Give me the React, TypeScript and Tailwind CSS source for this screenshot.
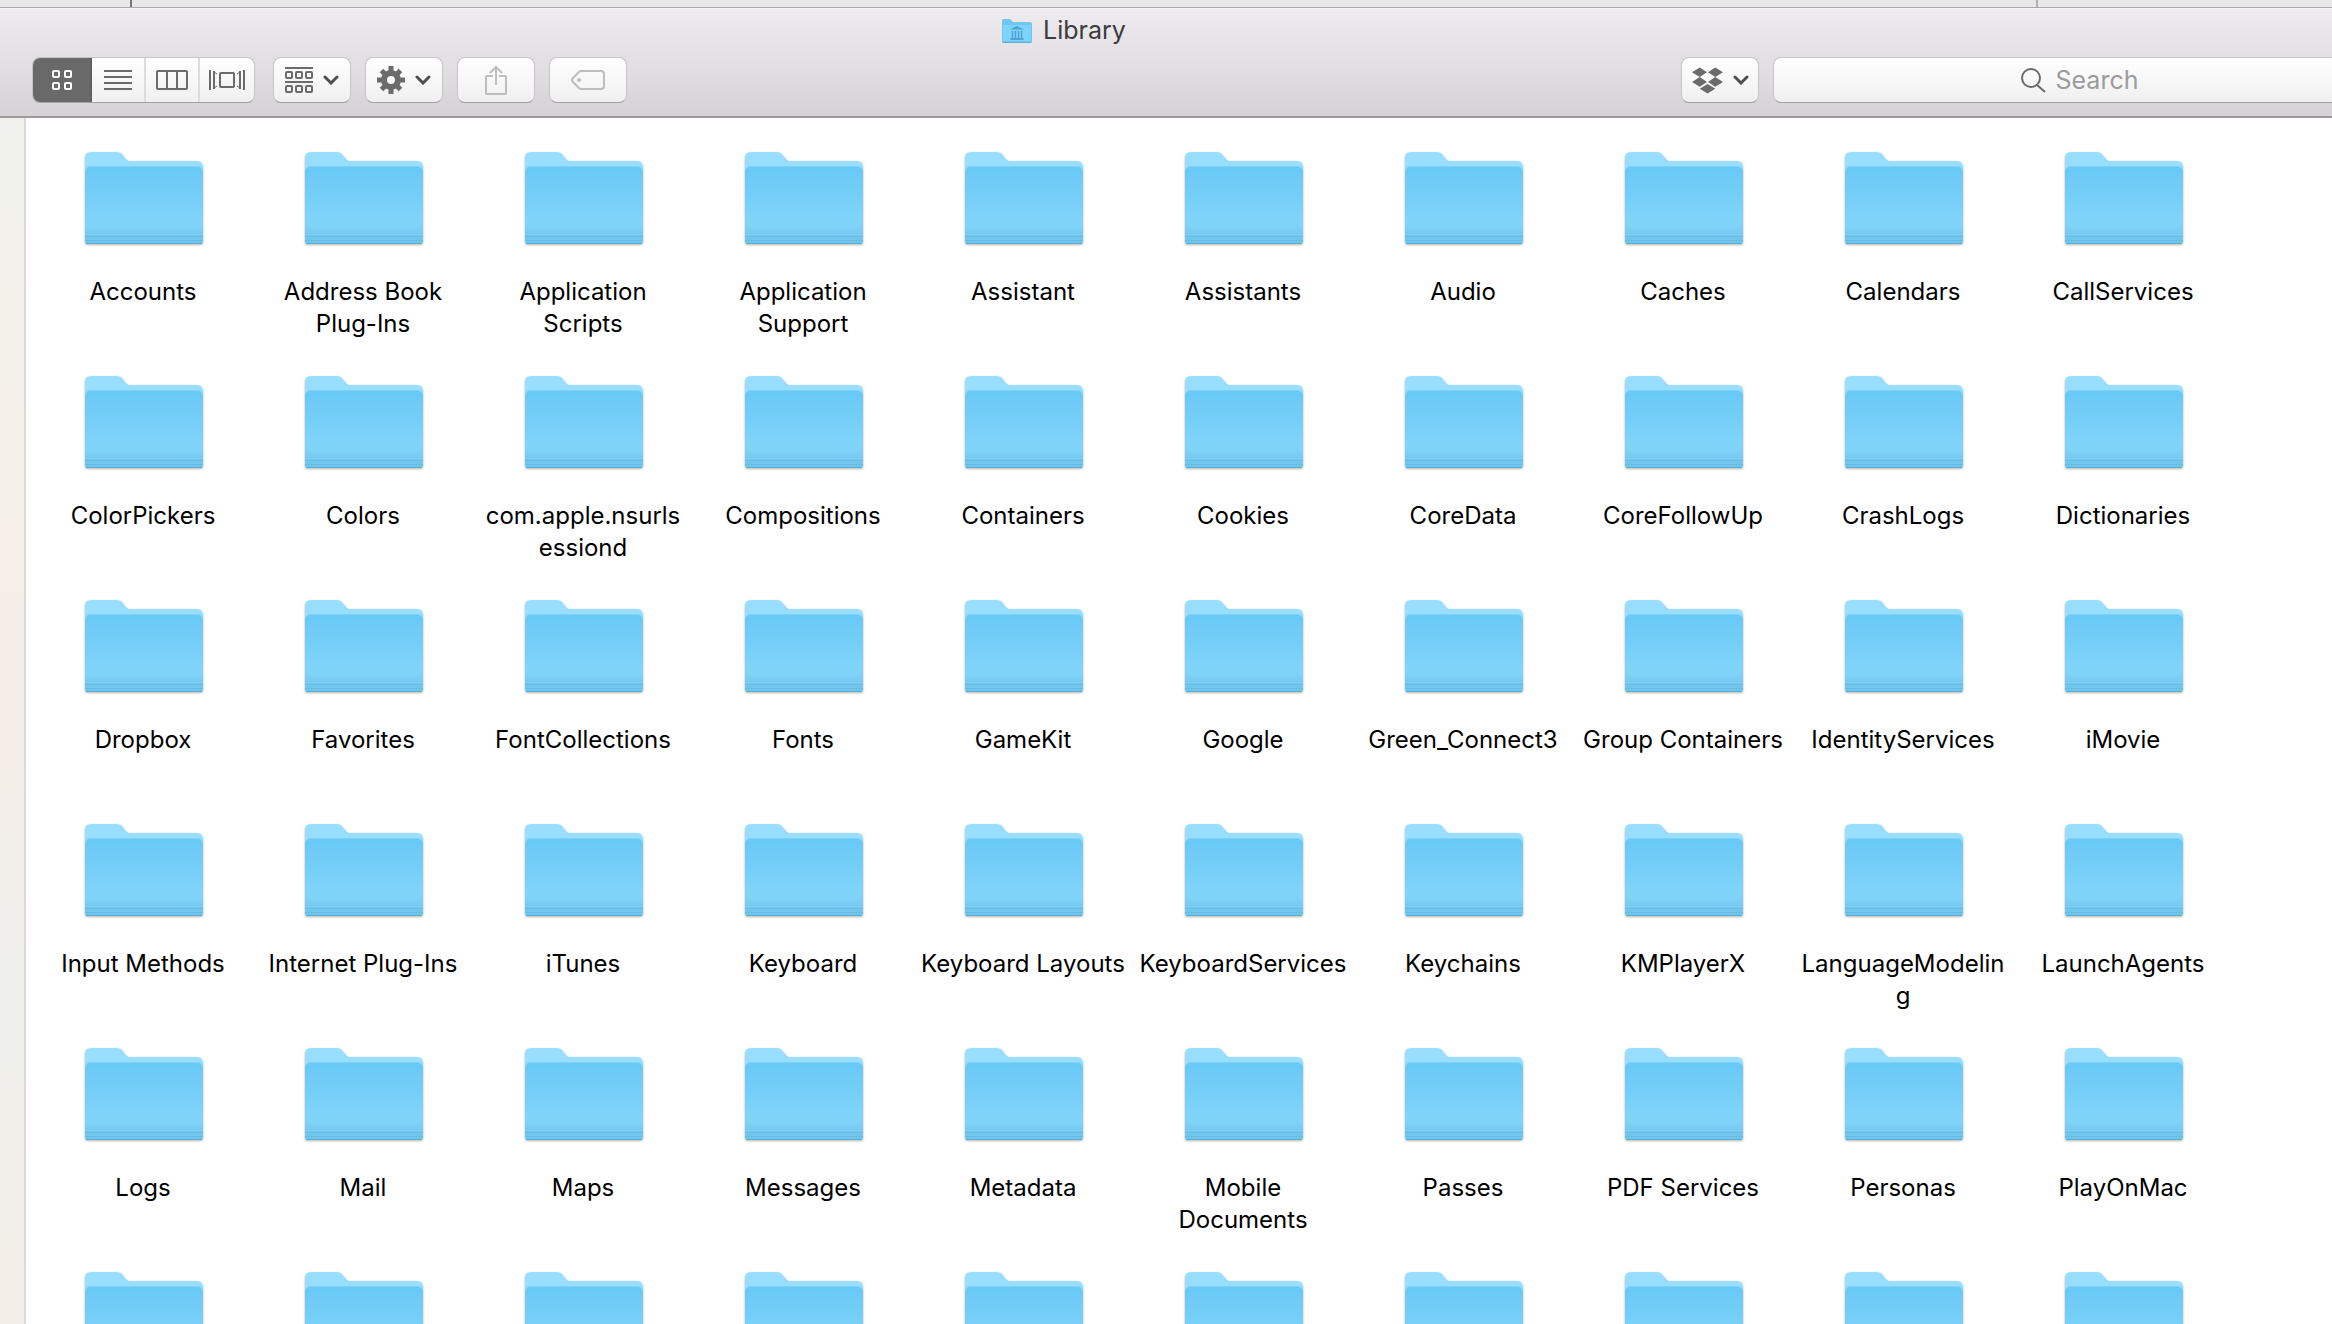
import React from "react";

const folders = [
  "Accounts", "Address Book Plug-Ins", "Application Scripts", "Application Support", "Assistant",
  "Assistants", "Audio", "Caches", "Calendars", "CallServices",
  "ColorPickers", "Colors", "com.apple.nsurlsessiond", "Compositions", "Containers",
  "Cookies", "CoreData", "CoreFollowUp", "CrashLogs", "Dictionaries",
  "Dropbox", "Favorites", "FontCollections", "Fonts", "GameKit",
  "Google", "Green_Connect3", "Group Containers", "IdentityServices", "iMovie",
  "Input Methods", "Internet Plug-Ins", "iTunes", "Keyboard", "Keyboard Layouts",
  "KeyboardServices", "Keychains", "KMPlayerX", "LanguageModeling", "LaunchAgents",
  "Logs", "Mail", "Maps", "Messages", "Metadata",
  "Mobile Documents", "Passes", "PDF Services", "Personas", "PlayOnMac",
];

const clippedRow = Array.from({ length: 10 }, (_, i) => i);

const FolderDefs = () => (
  <svg className="absolute size-0" aria-hidden="true">
    <defs>
      <linearGradient id="folderFront" x1="0" y1="0" x2="0" y2="1">
        <stop offset="0" stopColor="#69c9f6" />
        <stop offset="0.7" stopColor="#80d4f9" />
        <stop offset="0.78" stopColor="#7ed2f8" />
        <stop offset="0.88" stopColor="#72c8ef" />
        <stop offset="1" stopColor="#70c5ec" />
      </linearGradient>
      <filter id="folderShadow" x="-10%" y="-10%" width="120%" height="125%">
        <feDropShadow dx="0" dy="1" stdDeviation="1" floodColor="#000" floodOpacity="0.3" />
      </filter>
    </defs>
  </svg>
);

const FolderIcon = () => (
  <svg width="128" height="104" viewBox="-1 -1 128 104" aria-hidden="true">
    <g filter="url(#folderShadow)">
      <path
        d="M5 10 Q5 4 11 4 H37 Q40 4 42 6 L47 12 Q48 13 50 13 H117 Q123 13 123 19 V93 Q123 96 120 96 H8 Q5 96 5 93 Z"
        fill="#97deff"
      />
      <path d="M5 24 Q5 19 10 19 H118 Q123 19 123 24 V93 Q123 96 120 96 H8 Q5 96 5 93 Z" fill="url(#folderFront)" />
    </g>
    <path d="M8 18.500 H120" stroke="#84d1f5" />
    <path d="M5 86.500 H123" stroke="#80cdf1" />
    <path d="M5 88.500 H123 M5 92.500 H123" stroke="#67bae5" />
    <path d="M6 95.500 H122" stroke="#5cadd6" />
  </svg>
);

const LibraryIcon = () => (
  <svg width="32" height="26" viewBox="0 0 32 26" aria-hidden="true">
    <path d="M1 3 Q1 1 3 1 H9 L12 4 H29 Q31 4 31 6 V23 Q31 25 29 25 H3 Q1 25 1 23 Z" fill="#6fc6ee" />
    <path d="M2 7 H30 V23 H2 Z" fill="#7dd3f9" />
    <path d="M1.500 24.500 H30.500" stroke="#5aaeda" />
    <path d="M9 11.500 L16 8 L23 11.500 Z M9.500 20 H22.500 V22 H9.500 Z" fill="#4da3d2" />
    <path d="M11.500 13 V20 M14.500 13 V20 M17.500 13 V20 M20.500 13 V20" stroke="#4da3d2" strokeWidth="1.500" />
  </svg>
);

const GridIcon = () => (
  <svg width="20" height="20" viewBox="0 0 20 20" fill="none" stroke="#fff" strokeWidth="2" aria-hidden="true">
    <rect x="1" y="1" width="6" height="6" rx="1" />
    <rect x="13" y="1" width="6" height="6" rx="1" />
    <rect x="1" y="13" width="6" height="6" rx="1" />
    <rect x="13" y="13" width="6" height="6" rx="1" />
  </svg>
);

const ListIcon = () => (
  <svg width="28" height="20" viewBox="0 0 28 20" stroke="#6b6b6b" strokeWidth="2" aria-hidden="true">
    <path d="M0 1 H28 M0 7 H28 M0 13 H28 M0 19 H28" />
  </svg>
);

const ColumnsIcon = () => (
  <svg width="32" height="20" viewBox="0 0 32 20" fill="none" stroke="#6b6b6b" strokeWidth="2" aria-hidden="true">
    <rect x="1" y="1" width="30" height="18" rx="1" />
    <path d="M11 1 V19 M21 1 V19" />
  </svg>
);

const CoverFlowIcon = () => (
  <svg width="36" height="20" viewBox="0 0 36 20" fill="none" stroke="#6b6b6b" strokeWidth="2" aria-hidden="true">
    <rect x="11" y="3" width="14" height="14" rx="1" />
    <path d="M1 0 V20 M35 0 V20 M5 1 V19 M31 1 V19" />
    <path d="M5 2 L8 4 M5 18 L8 16 M31 2 L28 4 M31 18 L28 16" strokeWidth="1" />
  </svg>
);

const ArrangeIcon = () => (
  <svg width="28" height="26" viewBox="0 0 28 26" fill="none" stroke="#6b6b6b" strokeWidth="2" aria-hidden="true">
    <path d="M0 1 H28 M0 15 H28" />
    <rect x="1" y="5" width="6" height="6" rx="1" />
    <rect x="11" y="5" width="6" height="6" rx="1" />
    <rect x="21" y="5" width="6" height="6" rx="1" />
    <rect x="1" y="19" width="6" height="6" rx="1" />
    <rect x="11" y="19" width="6" height="6" rx="1" />
    <rect x="21" y="19" width="6" height="6" rx="1" />
  </svg>
);

const GearIcon = () => (
  <svg width="28" height="28" viewBox="0 0 28 28" aria-hidden="true">
    <circle cx="14" cy="14" r="7" fill="none" stroke="#6b6b6b" strokeWidth="6" />
    <path
      d="M14 0 V6 M14 22 V28 M0 14 H6 M22 14 H28 M4.500 4.500 L8 8 M20 20 L23.500 23.500 M4.500 23.500 L8 20 M20 8 L23.500 4.500"
      stroke="#6b6b6b"
      strokeWidth="5"
    />
  </svg>
);

const ShareIcon = () => (
  <svg width="22" height="30" viewBox="0 0 22 30" fill="none" stroke="#bdbdbd" strokeWidth="2" aria-hidden="true">
    <path d="M8 11 H2 Q1 11 1 12 V28 Q1 29 2 29 H20 Q21 29 21 28 V12 Q21 11 20 11 H14" />
    <path d="M11 20 V2 M5 8 L11 2 L17 8" />
  </svg>
);

const TagIcon = () => (
  <svg width="34" height="20" viewBox="0 0 34 20" fill="none" stroke="#bdbdbd" strokeWidth="2" aria-hidden="true">
    <path d="M10 1 H30 Q33 1 33 4 V16 Q33 19 30 19 H10 Q9 19 8 18 L2 12 Q0 10 2 8 L8 2 Q9 1 10 1 Z" />
    <circle cx="8" cy="10" r="2" fill="#bdbdbd" stroke="none" />
  </svg>
);

const DropboxIcon = () => (
  <svg width="31" height="27" viewBox="0 0 32 27" fill="#6b6b6b" aria-hidden="true">
    <path d="M8 0 L15.500 5 L8 10 L0 5 Z M24 0 L32 5 L24 10 L16.500 5 Z M8 10 L15.500 15 L8 20 L0 15 Z M24 10 L32 15 L24 20 L16.500 15 Z M16 17 L24 22 L16 27 L8 22 Z" />
  </svg>
);

const Chevron = () => (
  <svg width="16" height="10" viewBox="0 0 16 10" fill="none" stroke="#4f4f4f" strokeWidth="3" aria-hidden="true">
    <path d="M2 2 L8 8 L14 2" strokeLinecap="round" />
  </svg>
);

const SearchIcon = () => (
  <svg width="26" height="26" viewBox="0 0 26 26" fill="none" stroke="#6b6b6b" strokeWidth="2" aria-hidden="true">
    <circle cx="11" cy="11" r="9" />
    <path d="M17 18 L25 25" />
  </svg>
);

interface ToolbarButtonProps {
  label: string;
  menu?: boolean;
  disabled?: boolean;
  children: React.ReactNode;
}

const ToolbarButton: React.FC<ToolbarButtonProps> = ({ label, menu, disabled, children }) => (
  <button
    type="button"
    aria-label={label}
    aria-haspopup={menu ? "menu" : undefined}
    disabled={disabled}
    className="flex h-[46px] w-[78px] items-center justify-center gap-[10px] rounded-lg border border-[#c6c4c6] border-b-[#a3a1a3] bg-linear-to-b from-white to-[#f0f0f0]"
  >
    {children}
    {menu && <Chevron />}
  </button>
);

const viewModes = [
  { label: "Icon view", icon: <GridIcon /> },
  { label: "List view", icon: <ListIcon /> },
  { label: "Column view", icon: <ColumnsIcon /> },
  { label: "Cover flow view", icon: <CoverFlowIcon /> },
];

const ViewSwitcher = () => {
  const [active, setActive] = React.useState("Icon view");

  return (
    <div className="flex h-[46px] overflow-hidden rounded-lg border border-[#c6c4c6] border-b-[#a3a1a3] bg-linear-to-b from-white to-[#f0f0f0]">
      {viewModes.map(({ label, icon }) => (
        <button
          key={label}
          type="button"
          aria-label={label}
          aria-pressed={active === label}
          onClick={() => setActive(label)}
          className="flex w-[54px] items-center justify-center border-r-2 border-[#dcdcdc] first:w-[59px] last:border-r-0 aria-pressed:border-[#5f5f5f] aria-pressed:bg-[#696969]"
        >
          {icon}
        </button>
      ))}
    </div>
  );
};

const Toolbar = () => (
  <header className="overflow-hidden border-b-2 border-[#9b999b] bg-linear-to-b from-[#eeecef] to-[#d5d3d6] pb-[13px]">
    <h1 className="flex h-[49px] items-center justify-center gap-[10px] border-t border-[#f8f8f8] pr-[205px] pb-1 text-[25px] text-[#3c3b3d]">
      <LibraryIcon />
      Library
    </h1>
    <div className="flex items-center pl-8">
      <ViewSwitcher />
      <div className="ml-[18px] flex gap-[14px]">
        <ToolbarButton label="Arrange items" menu>
          <ArrangeIcon />
        </ToolbarButton>
        <ToolbarButton label="Actions" menu>
          <GearIcon />
        </ToolbarButton>
        <ToolbarButton label="Share" disabled>
          <ShareIcon />
        </ToolbarButton>
        <ToolbarButton label="Edit tags" disabled>
          <TagIcon />
        </ToolbarButton>
      </div>
      {/* The window runs past the right edge of the screen */}
      <div className="-mr-[56px] ml-auto flex gap-[14px]">
        <ToolbarButton label="Dropbox" menu>
          <DropboxIcon />
        </ToolbarButton>
        <label className="flex h-[46px] w-[615px] items-center justify-center gap-[10px] rounded-lg border border-[#c6c4c6] border-b-[#a3a1a3] bg-linear-to-b from-white to-[#f0f0f0]">
          <SearchIcon />
          <input
            type="text"
            placeholder="Search"
            aria-label="Search"
            className="w-[86px] bg-transparent pt-px text-[25px] outline-none placeholder:text-[#9c9c9c]"
          />
        </label>
      </div>
    </div>
  </header>
);

const App = () => (
  <div className="flex h-screen flex-col overflow-hidden bg-white font-['Inter','Liberation_Sans',sans-serif]">
    <FolderDefs />
    {/* Edge of the window behind */}
    <div className="flex h-2 shrink-0 justify-between border-b border-[#a9a9a9] bg-[#e8e8e8] pr-[294px] pl-[130px]">
      <div className="w-[2px] bg-[#777]" />
      <div className="w-[2px] bg-[#b0b0b0]" />
    </div>
    <Toolbar />
    <div className="flex min-h-0 flex-1">
      <aside className="w-[26px] shrink-0 border-r-2 border-[#dcdad7] bg-[linear-gradient(to_bottom,#f0f1ec,#f5f0e8_30%,#f5ede8_50%,#eff0ec_73%,#f4eee8)]" />
      <main className="flex-1 overflow-hidden pt-[29px] pl-[7px]">
        <ul className="grid auto-rows-[224px] grid-cols-[repeat(auto-fill,220px)]">
          {folders.map((name) => (
            <li key={name} className="flex flex-col items-center">
              <FolderIcon />
              <span className="mt-[25px] w-[208px] text-center text-[24px] leading-8 break-words text-black">
                {name}
              </span>
            </li>
          ))}
          {clippedRow.map((i) => (
            <li key={i} className="flex flex-col items-center">
              <FolderIcon />
            </li>
          ))}
        </ul>
      </main>
    </div>
  </div>
);

export default App;
